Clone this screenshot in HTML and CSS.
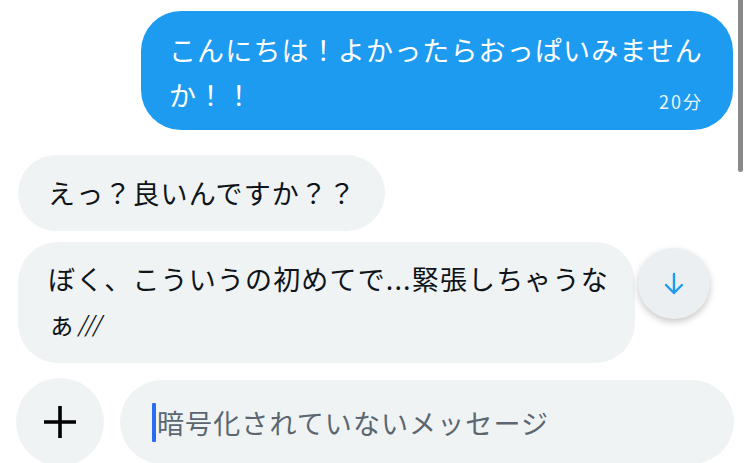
FILE: index.html
```html
<!DOCTYPE html>
<html lang="ja">
<head>
  <meta charset="UTF-8">
  <title>メッセージ</title>
  <link rel="stylesheet" href="styles.css">
</head>
<body>

<div class="screen">
  <div class="scrollbar"></div>

  <div class="thread">
    <div class="bubble sent">
      <div class="text">こんにちは！よかったらおっぱいみません<br>か！！</div>
      <div class="time">20分</div>
    </div>

    <div class="bubble received first">えっ？良いんですか？？</div>

    <div class="row">
      <div class="bubble received">ぼく、こういうの初めてで...緊張しちゃうな<br>ぁ<span class="slashes">///</span></div>
      <button class="jump" aria-label="最新へ">
        <svg width="22" height="24" viewBox="0 0 22 24">
          <path d="M11 2v19M3 13l8 8 8-8" fill="none" stroke="#1d9bf0" stroke-width="2.4" stroke-linecap="round" stroke-linejoin="round"/>
        </svg>
      </button>
    </div>
  </div>

  <div class="composer">
    <button class="add" aria-label="追加">
      <svg width="36" height="36" viewBox="0 0 36 36">
        <path d="M18 2v32M2 18h32" stroke="#000" stroke-width="3.6"/>
      </svg>
    </button>
    <div class="field">
      <span class="caret"></span><span class="placeholder">暗号化されていないメッセージ</span>
    </div>
  </div>
</div>

</body>
</html>
```

FILE: styles.css
```css
body {
  margin: 0;
  background: #fff;
  font-family: "Noto Sans CJK JP", "Noto Sans", Roboto, sans-serif;
  color: #0f1419;
}
.screen {
  position: relative;
  width: 749px;
  height: 463px;
  overflow: hidden;
  padding: 11px 15px 0 16px;
  box-sizing: border-box;
  display: flex;
  flex-direction: column;
}
.scrollbar {
  position: absolute;
  top: 0;
  right: 6px;
  width: 5px;
  height: 172px;
  background: #8a8a8a;
  border-radius: 0 0 3px 3px;
}
.thread {
  display: flex;
  flex-direction: column;
  align-items: flex-start;
}
.bubble {
  font-size: 27px;
  letter-spacing: 1.15px;
  line-height: 45px;
  border-radius: 40px;
  white-space: nowrap;
}
.sent {
  align-self: flex-end;
  margin-right: 1px;
  background: #1d9bf0;
  color: #fff;
  padding: 16px 30px 13px 28px;
  display: grid;
}
.sent .text, .sent .time {
  grid-area: 1 / 1;
}
.sent .time {
  justify-self: end;
  align-self: end;
  font-size: 18px;
  letter-spacing: 2px;
  line-height: 20px;
  margin-bottom: 6px;
  color: #eaf5fe;
}
.received {
  background: #eff3f4;
  padding: 15px 29px 16px 30px;
  margin-left: 2px;
}
.received.first {
  margin-top: 25px;
}
.row {
  position: relative;
  margin-top: 11px;
  width: 100%;
}
.row .received {
  display: inline-block;
  padding: 14px 26px 14px 30px;
}
.slashes {
  font-family: Roboto, sans-serif;
  font-style: italic;
  font-weight: 300;
  letter-spacing: 0;
  margin-left: 2px;
}
.jump {
  position: absolute;
  left: 622px;
  top: 6px;
  width: 72px;
  height: 71px;
  border: none;
  border-radius: 50%;
  background: #eceff1;
  box-shadow: 0 3px 7px rgba(0, 0, 0, 0.22);
  display: flex;
  align-items: center;
  justify-content: center;
  padding: 0;
}
.composer {
  margin-top: 15px;
  display: flex;
  align-items: center;
  gap: 16px;
}
.add {
  width: 88px;
  height: 88px;
  border: none;
  border-radius: 50%;
  background: #eff3f4;
  display: flex;
  align-items: center;
  justify-content: center;
  padding: 0;
  flex-shrink: 0;
}
.field {
  flex: 1;
  height: 84px;
  border-radius: 42px;
  background: #eff3f4;
  display: flex;
  align-items: center;
  padding-left: 32px;
}
.caret {
  width: 4px;
  height: 39px;
  background: #2a6cf2;
  border-radius: 1px;
  margin-right: 1px;
}
.placeholder {
  font-size: 27px;
  letter-spacing: 1.1px;
  color: #5b6670;
}
```
